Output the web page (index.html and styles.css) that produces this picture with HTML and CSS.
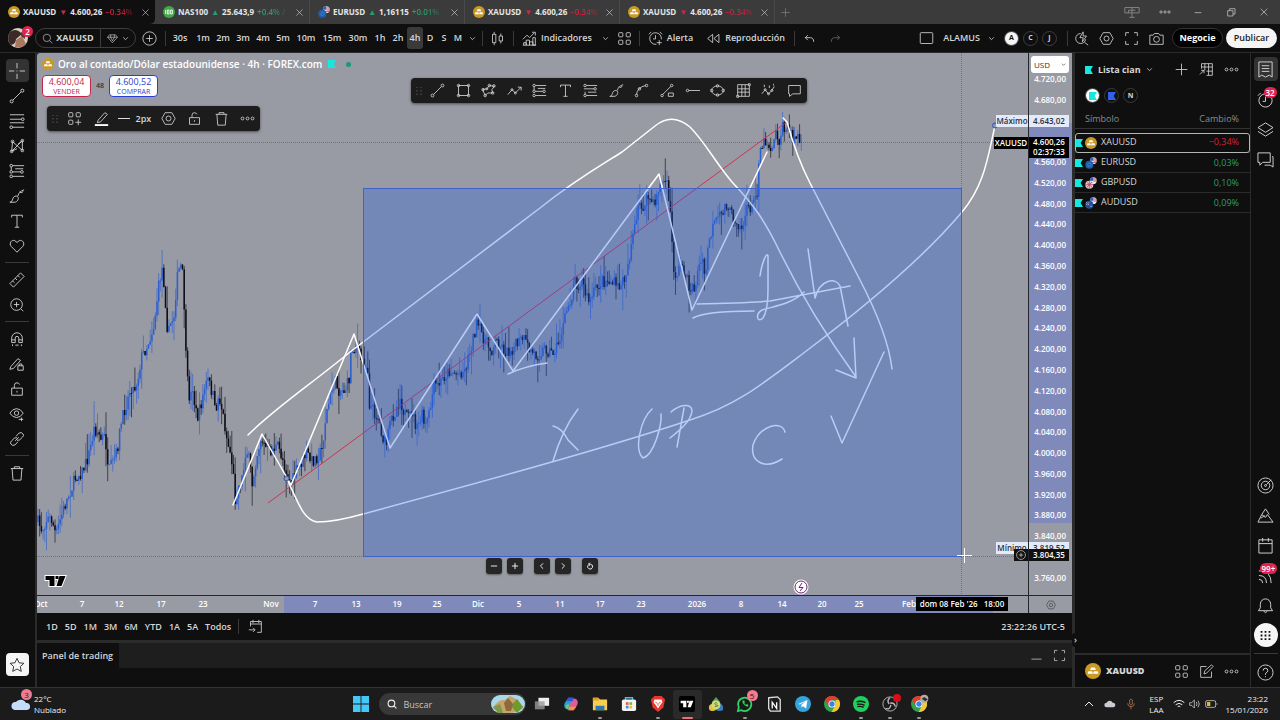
FILE: index.html
```html
<!DOCTYPE html>
<html lang="es">
<head>
    <meta charset="UTF-8">
    <meta name="viewport" content="width=device-width, initial-scale=1.0">
    <title>XAUUSD 4.600,26 −0.34% ALAMUS</title>
    <link rel="stylesheet" href="styles.css">
</head>
<body>
    <!-- icon sprite -->
    <svg class="sprite" aria-hidden="true">
        <symbol id="gold" viewBox="0 0 18 18"><circle cx="9" cy="9" r="9" fill="#c99a26" stroke="none"/><path d="M6.800 5h4.400l1 3H5.800zM3.800 9.200h4.200l1 3H2.800zM10 9.200h4.200l1 3H9z" fill="#fff" stroke="none"/></symbol>
        <symbol id="nas" viewBox="0 0 18 18"><circle cx="9" cy="9" r="9" fill="#43a847" stroke="none"/><path d="M4 6v6M6.500 6h2.500v6H6.500zM11.500 6H14v6h-2.500z" stroke="#fff" stroke-width="1.300"/></symbol>
        <symbol id="eur" viewBox="0 0 18 18"><g stroke="none"><circle cx="12.500" cy="5.500" r="5" fill="#e9e9f2"/><path d="M12.500.5a5 5 0 0 0-5 5h5z" fill="#2d5fb8"/><path d="M12.500 3h4.300M12.500 6h5M9 8.500h7.500" stroke="#d0344c" stroke-width="1.300"/><circle cx="6.500" cy="11.500" r="6" fill="#1c5fb0"/><circle cx="6.500" cy="11.500" r="2.500" fill="none" stroke="#8fb4e0" stroke-dasharray="1 1"/></g></symbol>
        <symbol id="gbp" viewBox="0 0 18 18"><g stroke="none"><circle cx="12.500" cy="5.500" r="5" fill="#e9e9f2"/><path d="M12.500.5a5 5 0 0 0-5 5h5z" fill="#2d5fb8"/><path d="M12.500 3h4.300M12.500 6h5" stroke="#d0344c" stroke-width="1.300"/><circle cx="6.500" cy="11.500" r="6" fill="#e8c9d2"/><path d="M6.500 5.500v12M.5 11.500h12M2.500 7.500l8 8M10.500 7.500l-8 8" stroke="#c04860" stroke-width="1.300"/></g></symbol>
        <symbol id="aud" viewBox="0 0 18 18"><g stroke="none"><circle cx="12.500" cy="5.500" r="5" fill="#e9e9f2"/><path d="M12.500.5a5 5 0 0 0-5 5h5z" fill="#2d5fb8"/><path d="M12.500 3h4.300M12.500 6h5" stroke="#d0344c" stroke-width="1.300"/><circle cx="6.500" cy="11.500" r="6" fill="#2050a0"/><path d="M2 8l4 4M6 8l-4 4M8 14h2" stroke="#fff"/><path d="M4 7v6M1 10h6" stroke="#d0344c"/></g></symbol>
        <symbol id="flag" viewBox="0 0 12 12"><path d="M0 0h12L8.500 6l3.500 6H0z" fill="currentColor" stroke="none"/></symbol>
        <symbol id="close" viewBox="0 0 18 18"><path d="M4 4l10 10M14 4L4 14"/></symbol>
        <symbol id="plus" viewBox="0 0 18 18"><path d="M9 2v14M2 9h14"/></symbol>
        <symbol id="chev" viewBox="0 0 18 18"><path d="M3 6l6 6 6-6"/></symbol>
        <symbol id="dots" viewBox="0 0 18 18"><circle cx="3" cy="9" r="1.700"/><circle cx="9" cy="9" r="1.700"/><circle cx="15" cy="9" r="1.700"/></symbol>
        <symbol id="grip" viewBox="0 0 18 18"><path d="M6 4v1M12 4v1M6 9v1M12 9v1M6 14v1M12 14v1" stroke="#777" stroke-width="2"/></symbol>
        <symbol id="search" viewBox="0 0 18 18"><circle cx="8" cy="8" r="6"/><path d="M12.500 12.500L17 17"/></symbol>
        <symbol id="gem" viewBox="0 0 18 18"><path d="M4 3h10l3 4-8 9-8-9zM1 7h16M6 7l3 6 3-6M6 3v4M12 3v4"/></symbol>
        <symbol id="addc" viewBox="0 0 18 18"><circle cx="9" cy="9" r="8"/><path d="M9 5v8M5 9h8"/></symbol>
        <symbol id="candles" viewBox="0 0 18 18"><path d="M3 4h4v10H3zM5 1v3M5 14v3M11 6h4v6h-4zM13 3v3M13 12v3"/></symbol>
        <symbol id="indic" viewBox="0 0 18 18"><path d="M1 10l5-5 3 3 6-6M12 1.500h4v4M2 17v-3h3v3M5 17v-6h4v6M9 17v-4h4v4M13 17V8h3v9zM1 17h16"/></symbol>
        <symbol id="grid4" viewBox="0 0 18 18"><rect x="2" y="2" width="5" height="5" rx="1"/><rect x="11" y="2" width="5" height="5" rx="1"/><rect x="2" y="11" width="5" height="5" rx="1"/><rect x="11" y="11" width="5" height="5" rx="1"/></symbol>
        <symbol id="gridp" viewBox="0 0 18 18"><rect x="2" y="2" width="5" height="5" rx="1"/><rect x="11" y="2" width="5" height="5" rx="1"/><rect x="2" y="11" width="5" height="5" rx="1"/><path d="M13.500 10v7M10 13.500h7"/></symbol>
        <symbol id="alarm" viewBox="0 0 18 18"><path d="M10 16a7 7 0 1 1 6-6M9 5v4.500H6M1 4l3-3M14 1l3 3M13.500 11v6M10.500 14h6"/></symbol>
        <symbol id="replay" viewBox="0 0 18 18"><path d="M8 4v10L2 9zM15.500 4v10l-6-5z"/></symbol>
        <symbol id="undo" viewBox="0 0 18 18"><path d="M7 5L4 8l3 3M4 8h6q4 0 4 5"/></symbol>
        <symbol id="redo" viewBox="0 0 18 18"><path d="M11 5l3 3-3 3M14 8H8q-4 0-4 5"/></symbol>
        <symbol id="layout" viewBox="0 0 18 18"><rect x="1.500" y="2" width="15" height="13" rx="1"/></symbol>
        <symbol id="quick" viewBox="0 0 18 18"><path d="M8 3a6 6 0 1 0 6 7M12.500 13.500L17 17M11 1L7 8h4l-1 5 5-7h-4z"/></symbol>
        <symbol id="hex" viewBox="0 0 18 18"><path d="M5 2h8l4 7-4 7H5L1 9z"/><circle cx="9" cy="9" r="3"/></symbol>
        <symbol id="full" viewBox="0 0 18 18"><path d="M2 6V2h4M12 2h4v4M16 12v4h-4M6 16H2v-4"/></symbol>
        <symbol id="camera" viewBox="0 0 18 18"><path d="M1 5h4l1.500-2h5L13 5h4v11H1z"/><circle cx="9" cy="10" r="3.500"/></symbol>
        <symbol id="cross" viewBox="0 0 18 18"><path d="M9 0v6M9 12v6M0 9h6M12 9h6M9 8.500v1"/></symbol>
        <symbol id="trend" viewBox="0 0 18 18"><circle cx="3" cy="15" r="1.700"/><circle cx="15" cy="3" r="1.700"/><path d="M4.500 13.500l9-9"/></symbol>
        <symbol id="fib" viewBox="0 0 18 18"><path d="M1 2h16M1 7h13M1 11h16M4 16h13"/><circle cx="15.500" cy="7" r="1.500"/><circle cx="2.500" cy="16" r="1.500"/></symbol>
        <symbol id="pattern" viewBox="0 0 18 18"><path d="M3 15L4 4l11 10V3L3 15M3 15l6-3M15 3l-5 4"/><circle cx="3" cy="15" r="1.500"/><circle cx="4" cy="4" r="1.500"/><circle cx="15" cy="3" r="1.500"/><circle cx="15" cy="14" r="1.500"/></symbol>
        <symbol id="forecast" viewBox="0 0 18 18"><path d="M4 3h13M4 10h9M4 15h13M2.500 4.500v4M7 6.500h9"/><circle cx="2.500" cy="3" r="1.500"/><circle cx="2.500" cy="10" r="1.500"/><circle cx="2.500" cy="15" r="1.500"/><circle cx="14.500" cy="10" r="1.500"/></symbol>
        <symbol id="short" viewBox="0 0 18 18"><path d="M4 3h13M1 7h12M4 15h13M2.500 13.500v-3M6 11h10"/><circle cx="2.500" cy="3" r="1.500"/><circle cx="14.500" cy="7" r="1.500"/><circle cx="2.500" cy="15" r="1.500"/></symbol>
        <symbol id="brush" viewBox="0 0 18 18"><path d="M1 16c4 0 2-7 7-7 4 0 3 7-2 7zM10 9q1-5 7-7M12 4q1 3 4 0"/></symbol>
        <symbol id="text" viewBox="0 0 18 18"><path d="M3 5V2.500h12V5M9 2.500V16M6.500 16h5"/></symbol>
        <symbol id="heart" viewBox="0 0 18 18"><path d="M9 16L2.500 9.500C-.5 6 3 1.500 6.500 3L9 5l2.500-2C15 1.500 18.500 6 15.500 9.500z"/></symbol>
        <symbol id="ruler" viewBox="0 0 18 18"><path d="M1 13L13 1l4 4L5 17zM4 10l2 2M7 7l2 2M10 4l2 2"/></symbol>
        <symbol id="zoomin" viewBox="0 0 18 18"><circle cx="8.500" cy="8.500" r="6.500"/><path d="M13.500 13.500L16 16M8.500 5.500v6M5.500 8.500h6"/></symbol>
        <symbol id="magnet" viewBox="0 0 18 18"><path d="M3 13V8a6 6 0 0 1 12 0v5h-4V8a2 2 0 0 0-4 0v5zM3 10h4M11 10h4M4 15v2M8 15v2M10 15v2M14 15v2"/></symbol>
        <symbol id="penlock" viewBox="0 0 18 18"><path d="M2 12l8-9 3 2-8 9-4 1zM10 11h6v5h-6zM11.500 11V9h3v2"/></symbol>
        <symbol id="unlock" viewBox="0 0 18 18"><path d="M3 8h12v8H3zM6 8V5q0-3 3-3 2 0 3 2M9 11v2"/></symbol>
        <symbol id="eye" viewBox="0 0 18 18"><path d="M1 8q3-5 7.500-5T16 8q-3 5-7.500 5T1 8zM11 15h5M14 13v4"/><circle cx="8.500" cy="8" r="2.500"/></symbol>
        <symbol id="link" viewBox="0 0 18 18"><path d="M8 6l3-3.500q3-2 5 1 1 2-1 3.500l-3 3-3 .5M10 12l-3 3.500q-3 2-5-1-1-2 1-3.500l3-3 3-.5M7 11l4-4"/></symbol>
        <symbol id="trash" viewBox="0 0 18 18"><path d="M2 4h14M6 4V2h6v2M3.500 4l1 13h9l1-13"/></symbol>
        <symbol id="star" viewBox="0 0 18 18"><path d="M9 1.500l2.300 5 5.400.6-4 3.700 1.100 5.400L9 13.500l-4.800 2.700 1.100-5.400-4-3.700 5.400-.6z"/></symbol>
        <symbol id="pencil" viewBox="0 0 18 18"><path d="M5 11l8-9 3 2-8 9-4 1z"/><path d="M1 17h16" stroke="#fff" stroke-width="2.500"/></symbol>
        <symbol id="rect" viewBox="0 0 18 18"><path d="M3 3h12v12H3z"/><circle cx="3" cy="3" r="1.500"/><circle cx="15" cy="3" r="1.500"/><circle cx="3" cy="15" r="1.500"/><circle cx="15" cy="15" r="1.500"/></symbol>
        <symbol id="poly" viewBox="0 0 18 18"><path d="M5 15L2 8l5-1 3-4 6 1-3 4 1 4-6 0-3 3"/><circle cx="5" cy="15" r="1.500"/><circle cx="2.500" cy="8" r="1.500"/><circle cx="7" cy="7" r="1.200"/><circle cx="10" cy="3" r="1.500"/><circle cx="15.500" cy="3.500" r="1.500"/><circle cx="14" cy="12" r="1.500"/></symbol>
        <symbol id="arrowz" viewBox="0 0 18 18"><path d="M1 14l5-6 4 4 7-7M13 5h4v4"/><circle cx="6" cy="8" r="1.200"/><circle cx="10" cy="12" r="1.200"/></symbol>
        <symbol id="arc" viewBox="0 0 18 18"><path d="M3 14q1-9 11-11"/><circle cx="3" cy="15" r="1.500"/><circle cx="6.500" cy="7" r="1.500"/><circle cx="15" cy="3" r="1.500"/></symbol>
        <symbol id="trendo" viewBox="0 0 18 18"><path d="M3 14L13 4M10 12h6v4h-6z"/><circle cx="2.500" cy="15" r="1.500"/><circle cx="14" cy="3" r="1.500"/></symbol>
        <symbol id="hline" viewBox="0 0 18 18"><circle cx="3" cy="9" r="1.500"/><path d="M4.500 9H18"/></symbol>
        <symbol id="ellipse" viewBox="0 0 18 18"><ellipse cx="9" cy="9" rx="7" ry="5.500"/><circle cx="2" cy="9" r="1.500"/><circle cx="16" cy="9" r="1.500"/><circle cx="9" cy="3.500" r="1.500"/><circle cx="9" cy="14.500" r="1.500"/></symbol>
        <symbol id="gann" viewBox="0 0 18 18"><path d="M2 2h14v14H2zM7 2v14M11 2v14M2 7h14M2 11h14"/><circle cx="16" cy="2" r="1.500"/><circle cx="2" cy="16" r="1.500"/></symbol>
        <symbol id="waves" viewBox="0 0 18 18"><path d="M1 13l4-5 4 5 4-4 3-5M4 2v3M10 3v3M15 1v2"/><circle cx="5" cy="8" r="1.200"/><circle cx="9" cy="13" r="1.200"/><circle cx="13" cy="9" r="1.200"/></symbol>
        <symbol id="note" viewBox="0 0 18 18"><path d="M2 3h14v10H7l-4 3v-3H2z"/></symbol>
        <symbol id="list" viewBox="0 0 18 18"><path d="M2 1h14v16l-3-2-4 2-4-2-3 2zM5 5h8M5 8h8M5 11h8"/></symbol>
        <symbol id="clock" viewBox="0 0 18 18"><circle cx="9" cy="10" r="7"/><path d="M9 6v5H6M1 5l3-3"/></symbol>
        <symbol id="layers" viewBox="0 0 18 18"><path d="M9 2l8 5-8 5-8-5zM1 11l8 5 8-5"/></symbol>
        <symbol id="chat" viewBox="0 0 18 18"><path d="M1 2h13v10H6l-3 3v-3H1zM16 6h1v11l-3-2H8"/></symbol>
        <symbol id="target" viewBox="0 0 18 18"><circle cx="9" cy="9" r="8"/><circle cx="9" cy="9" r="4.500"/><circle cx="9" cy="9" r="1"/><path d="M10 8l5-5"/></symbol>
        <symbol id="mount" viewBox="0 0 18 18"><path d="M5 8L9 2l4 6M1 16l4-8 4 3 2-3 6 8zM4 12l4-3"/></symbol>
        <symbol id="cal" viewBox="0 0 18 18"><path d="M2 3h14v14H2zM2 7h14M6 1v4M12 1v4"/></symbol>
        <symbol id="calgo" viewBox="0 0 18 18"><path d="M3 9V3h13v13h-5M3 6h13M6 1v4M13 1v4M1 13h7M6 10.500L8.500 13 6 15.500"/></symbol>
        <symbol id="feed" viewBox="0 0 18 18"><path d="M2 4q13 0 13 13M2 9q8 0 8 8M2 13q4 0 4 4"/></symbol>
        <symbol id="bell" viewBox="0 0 18 18"><path d="M1.500 14.500h15l-2-3V8c0-8-11-8-11 0v3.500zM7 15q2 3 4 0"/></symbol>
        <symbol id="apps" viewBox="0 0 18 18"><path d="M1 3h3M7.500 3h3M14 3h3M1 9h3M7.500 9h3M14 9h3M1 15h3M7.500 15h3M14 15h3" stroke-width="3"/></symbol>
        <symbol id="help" viewBox="0 0 18 18"><circle cx="9" cy="9" r="8"/><path d="M6.500 7q0-2.500 2.500-2.500T11.500 7Q11.500 8.500 9 10v1.500M9 13v1"/></symbol>
        <symbol id="tableico" viewBox="0 0 18 18"><path d="M3 8V2h13v14H9M3 6h13M7 2v8M11.500 2v14M9 11h7M1 15l5-5M2.500 10H6v3.500"/></symbol>
        <symbol id="edit" viewBox="0 0 18 18"><path d="M9 3H2v13h13V9M6 12l1-4 8-7 2 2-8 8z"/></symbol>
        <symbol id="tv" viewBox="0 0 22 14"><path d="M1 2h9v10H5V6H1zM15 2h6l-4 10h-5zM11 2h3v3h-3z"/></symbol>
        <symbol id="monitor" viewBox="0 0 18 18"><path d="M1 4h16v6H1zM9 4v11M6 15h6M5 10v-3h8"/></symbol>
        <symbol id="reload" viewBox="0 0 18 18"><path d="M5 7a5.500 5.500 0 1 0 5-2H6M9 1.500L5.500 5 9 8.500"/></symbol>
        <symbol id="left" viewBox="0 0 18 18"><path d="M11.500 3l-6 6 6 6"/></symbol>
        <symbol id="right" viewBox="0 0 18 18"><path d="M6.500 3l6 6-6 6"/></symbol>
        <symbol id="minus" viewBox="0 0 18 18"><path d="M2 9h14"/></symbol>
    </svg>

    <div class="app">
        <header class="tabs">
            <button class="tab active"><svg class="coin"><use href="#gold"/></svg><b>XAUUSD</b><i class="down">▼</i><b>4.600,26</b><span class="pct neg">−0.34%</span><svg class="x"><use href="#close"/></svg></button>
            <button class="tab"><svg class="coin"><use href="#nas"/></svg><b>NAS100</b><i class="up">▲</i><b>25.643,9</b><span class="pct pos">+0.4% /</span><svg class="x"><use href="#close"/></svg></button>
            <button class="tab"><svg class="coin"><use href="#eur"/></svg><b>EURUSD</b><i class="up">▲</i><b>1,16115</b><span class="pct pos">+0.01%</span><svg class="x"><use href="#close"/></svg></button>
            <button class="tab"><svg class="coin"><use href="#gold"/></svg><b>XAUUSD</b><i class="down">▼</i><b>4.600,26</b><span class="pct neg">−0.34%</span><svg class="x"><use href="#close"/></svg></button>
            <button class="tab"><svg class="coin"><use href="#gold"/></svg><b>XAUUSD</b><i class="down">▼</i><b>4.600,26</b><span class="pct neg">−0.34%</span><svg class="x"><use href="#close"/></svg></button>
            <button class="newtab" aria-label="Nueva pestaña"><svg class="x"><use href="#plus"/></svg></button>
            <div class="window-btns">
                <button aria-label="Pantallas"><svg class="big"><use href="#monitor"/></svg></button>
                <button aria-label="Menú"><svg class="mid"><use href="#dots"/></svg></button>
                <button aria-label="Minimizar"><svg viewBox="0 0 18 18"><path d="M4 10h10"/></svg></button>
                <button aria-label="Restaurar"><svg viewBox="0 0 18 18"><path d="M4 7h8v8H4zM7 7V4h8v8h-3"/></svg></button>
                <button aria-label="Cerrar"><svg><use href="#close"/></svg></button>
            </div>
        </header>

        <div class="toolbar">
            <button class="avatar" aria-label="Perfil">
                <svg viewBox="0 0 20 20"><circle cx="10" cy="10" r="10" fill="#d9cfc6"/><path d="M2 4a10 10 0 0 0 1 13q5-1 5-6l6-5q-6-7-12-2z" fill="#3b2a26"/><path d="M8 12l6-4 4 8q-5 5-11 3z" fill="#a87860"/><path d="M13 4l4 2v5l-4-3z" fill="#5c3a32"/></svg>
                <span class="badge">2</span>
            </button>
            <div class="search-pill">
                <button class="symbol"><svg><use href="#search"/></svg>XAUUSD</button>
                <button class="gem" aria-label="Símbolos similares"><svg><use href="#gem"/></svg><svg class="chev"><use href="#chev"/></svg></button>
            </div>
            <button class="tool" aria-label="Comparar"><svg><use href="#addc"/></svg></button>
            <span class="sep"></span>
            <button class="tf wide">30s</button>
            <button class="tf">1m</button>
            <button class="tf">2m</button>
            <button class="tf">3m</button>
            <button class="tf">4m</button>
            <button class="tf">5m</button>
            <button class="tf wide">10m</button>
            <button class="tf wide">15m</button>
            <button class="tf wide">30m</button>
            <button class="tf hour">1h</button>
            <button class="tf hour">2h</button>
            <button class="tf hour on">4h</button>
            <button class="tf one">D</button>
            <button class="tf one">S</button>
            <button class="tf one">M</button>
            <button class="tf one" aria-label="Más intervalos"><svg class="chev"><use href="#chev"/></svg></button>
            <span class="sep"></span>
            <button class="tool" aria-label="Velas"><svg><use href="#candles"/></svg></button>
            <span class="sep"></span>
            <button class="labelled"><svg><use href="#indic"/></svg>Indicadores</button>
            <button class="tool chevbtn" aria-label="Favoritos"><svg class="chev"><use href="#chev"/></svg></button>
            <button class="tool slim" aria-label="Plantillas"><svg><use href="#grid4"/></svg></button>
            <span class="sep"></span>
            <button class="labelled"><svg><use href="#alarm"/></svg>Alerta</button>
            <button class="labelled second"><svg><use href="#replay"/></svg>Reproducción</button>
            <span class="sep"></span>
            <button class="tool" aria-label="Deshacer"><svg><use href="#undo"/></svg></button>
            <button class="tool dim" aria-label="Rehacer"><svg><use href="#redo"/></svg></button>
            <div class="toolbar-right">
                <button class="tool" aria-label="Diseño"><svg><use href="#layout"/></svg></button>
                <button class="layout-name">ALAMUS<svg class="chev"><use href="#chev"/></svg></button>
                <button class="round on">A</button>
                <button class="round">C</button>
                <button class="round">J</button>
                <span class="sep"></span>
                <button class="tool" aria-label="Búsqueda rápida"><svg><use href="#quick"/></svg></button>
                <button class="tool" aria-label="Configuración"><svg><use href="#hex"/></svg></button>
                <button class="tool" aria-label="Pantalla completa"><svg><use href="#full"/></svg></button>
                <button class="tool" aria-label="Captura"><svg><use href="#camera"/></svg></button>
                <button class="pill dark">Negocie</button>
                <button class="pill light">Publicar</button>
            </div>
        </div>

        <main class="workspace">
            <nav class="draw-tools">
                <button class="on" aria-label="Cruz"><svg><use href="#cross"/></svg></button>
                <button aria-label="Línea"><svg><use href="#trend"/></svg></button>
                <button aria-label="Fibonacci"><svg><use href="#fib"/></svg></button>
                <button aria-label="Patrones"><svg><use href="#pattern"/></svg></button>
                <button aria-label="Previsión"><svg><use href="#forecast"/></svg></button>
                <button aria-label="Pincel"><svg><use href="#brush"/></svg></button>
                <button aria-label="Texto"><svg><use href="#text"/></svg></button>
                <button aria-label="Iconos"><svg><use href="#heart"/></svg></button>
                <hr>
                <button aria-label="Medir"><svg><use href="#ruler"/></svg></button>
                <button aria-label="Acercar"><svg><use href="#zoomin"/></svg></button>
                <hr>
                <button aria-label="Imán"><svg><use href="#magnet"/></svg></button>
                <button aria-label="Modo dibujo"><svg><use href="#penlock"/></svg></button>
                <button aria-label="Bloquear"><svg><use href="#unlock"/></svg></button>
                <button aria-label="Ocultar"><svg><use href="#eye"/></svg></button>
                <button aria-label="Enlazar"><svg><use href="#link"/></svg></button>
                <hr>
                <button aria-label="Eliminar"><svg><use href="#trash"/></svg></button>
                <button class="fav" aria-label="Favoritos"><svg><use href="#star"/></svg></button>
            </nav>

            <section class="center">
                <div class="chart">
                    <div class="plot">
                        <svg class="canvas" viewBox="37 53 991 542" preserveAspectRatio="none">
                            <path class="dotted" d="M37 142.500h991M37 556.500h991M961.500 53v542"/>
                            <g id="candles-layer"></g>
                            <path class="red" d="M268 503L787 122"/>
                            <g class="ink">
                                <path d="M233 505L262 434L291 485L354 334L390 448L477 314L513 371L659 174L692 310L767 152M783 118L787 122Q797 158 810 183L860 280Q888 334 892 369"/>
                                <path d="M248 435C275 408 310 385 350 352L540 208C575 180 600 166 622 152L655 126Q672 112 690 127C705 142 715 162 732 182C755 206 765 222 776 244C798 290 822 330 856 377M836 370L856 378L854 338"/>
                                <path d="M995 126C988 155 985 185 962 212C920 262 850 318 805 352S735 406 690 420C600 450 470 485 363 514Q335 522 317 522C304 520 299 505 287 479"/>
                                <path d="M508 374Q525 366 547 363"/>
                                <path d="M697 304Q745 303 770 301L850 286M693 318Q705 311 754 311M760 276C762 262 767 251 768 256L768 290Q768 310 763 318C757 324 755 314 762 310C775 306 792 304 804 292M808 249L815 298C820 279 836 277 840 286L848 326"/>
                                <path d="M553 426Q562 428 568 440L578 450M578 409Q562 430 553 461"/>
                                <path d="M652 409C640 420 634 450 643 458C654 455 662 425 661 414M684 408L677 447M671 412C680 404 692 403 692 411C691 421 680 430 670 438"/>
                                <path d="M785 432C782 420 760 425 753 445C750 462 765 470 782 459"/>
                                <path d="M884 352L842 443L831 416"/>
                            </g>
                            <rect class="range" x="363.500" y="188.500" width="598" height="368"/>
                            <g class="handle"><circle cx="995" cy="125.500" r="2.500"/><circle cx="286.500" cy="478.500" r="2.500"/></g>
                            <path class="cursor" d="M957 555.500h15M964.500 548v15"/>
                        </svg>

                        <div class="legend">
                            <div class="legend-title"><svg class="coin"><use href="#gold"/></svg>Oro al contado/Dólar estadounidense · 4h · FOREX.com<svg class="flag"><use href="#flag"/></svg><span class="live"></span></div>
                            <div class="orders">
                                <button class="order sell">4.600,04<small>VENDER</small></button>
                                <span class="spread">48</span>
                                <button class="order buy">4.600,52<small>COMPRAR</small></button>
                            </div>
                        </div>

                        <div class="floating style-bar">
                            <svg class="grip"><use href="#grip"/></svg>
                            <button aria-label="Plantilla"><svg><use href="#gridp"/></svg></button>
                            <button aria-label="Color"><svg><use href="#pencil"/></svg></button>
                            <button class="width-btn"><span class="dash"></span>2px</button>
                            <button aria-label="Ajustes"><svg><use href="#hex"/></svg></button>
                            <button aria-label="Bloquear"><svg><use href="#unlock"/></svg></button>
                            <button aria-label="Eliminar"><svg><use href="#trash"/></svg></button>
                            <button aria-label="Más"><svg><use href="#dots"/></svg></button>
                        </div>

                        <div class="floating fav-bar">
                            <svg class="grip"><use href="#grip"/></svg>
                            <button aria-label="Línea"><svg><use href="#trend"/></svg></button>
                            <button aria-label="Rectángulo"><svg><use href="#rect"/></svg></button>
                            <button aria-label="Trazado"><svg><use href="#poly"/></svg></button>
                            <button aria-label="Ruta"><svg><use href="#arrowz"/></svg></button>
                            <button aria-label="Posición larga"><svg><use href="#forecast"/></svg></button>
                            <button aria-label="Texto"><svg><use href="#text"/></svg></button>
                            <button aria-label="Posición corta"><svg><use href="#short"/></svg></button>
                            <button aria-label="Pincel"><svg><use href="#brush"/></svg></button>
                            <button aria-label="Curva"><svg><use href="#arc"/></svg></button>
                            <button aria-label="Línea con info"><svg><use href="#trendo"/></svg></button>
                            <button aria-label="Rayo horizontal"><svg><use href="#hline"/></svg></button>
                            <button aria-label="Elipse"><svg><use href="#ellipse"/></svg></button>
                            <button aria-label="Caja de Gann"><svg><use href="#gann"/></svg></button>
                            <button aria-label="Ondas"><svg><use href="#waves"/></svg></button>
                            <button aria-label="Nota"><svg><use href="#note"/></svg></button>
                        </div>

                        <div class="nav-btns">
                            <button aria-label="Alejar"><svg><use href="#minus"/></svg></button>
                            <button aria-label="Acercar"><svg><use href="#plus"/></svg></button>
                            <button class="gap" aria-label="Izquierda"><svg><use href="#left"/></svg></button>
                            <button aria-label="Derecha"><svg><use href="#right"/></svg></button>
                            <button class="gap" aria-label="Restablecer"><svg><use href="#reload"/></svg></button>
                        </div>
                        <svg class="tv-logo"><use href="#tv"/></svg>
                        <svg class="event" viewBox="0 0 16 16"><circle cx="8" cy="8" r="7.500" fill="#fff" stroke="none"/><circle cx="8" cy="8" r="6" stroke="#6d1f7a"/><path d="M9 4L6 8.500h4L7 12" stroke="#6d1f7a"/></svg>

                        <span class="tag max">Máximo</span>
                        <span class="tag sym">XAUUSD</span>
                        <span class="tag min">Mínimo</span>
                        <button class="tag add" aria-label="Añadir orden"><svg><use href="#addc"/></svg></button>
                    </div>

                    <div class="price-axis">
                        <label class="currency"><select aria-label="Moneda"><option>USD</option></select><svg class="chev"><use href="#chev"/></svg></label>
                        <div class="prices" id="prices"></div>
                        <span class="ptag max">4.643,02</span>
                        <span class="ptag last">4.600,26<br>02:37:33</span>
                        <span class="ptag min">3.819,52</span>
                        <span class="ptag cur">3.804,35</span>
                    </div>

                    <div class="time-axis">
                        <div class="time-range"></div>
                        <div id="times"></div>
                        <span class="time-tag">dom 08 Feb '26 &nbsp; 18:00</span>
                    </div>
                    <button class="axis-corner" aria-label="Ajustes de escala"><svg><use href="#hex"/></svg></button>
                </div>

                <div class="ranges">
                    <button>1D</button><button>5D</button><button>1M</button><button>3M</button><button>6M</button><button>YTD</button><button>1A</button><button>5A</button><button>Todos</button>
                    <span class="sep"></span>
                    <button aria-label="Ir a la fecha"><svg><use href="#calgo"/></svg></button>
                    <span class="utc">23:22:26 UTC-5</span>
                </div>

                <div class="trading">
                    <button class="trading-tab">Panel de trading</button>
                    <div class="trading-btns">
                        <button aria-label="Minimizar panel"><svg viewBox="0 0 18 18"><path d="M2 14h14"/></svg></button>
                        <button aria-label="Maximizar panel"><svg><use href="#full"/></svg></button>
                    </div>
                </div>
                <div class="trading-body"></div>
            </section>

            <aside class="watch">
                <div class="watch-head">
                    <button class="list-name"><svg class="flag"><use href="#flag"/></svg>Lista cian<svg class="chev"><use href="#chev"/></svg></button>
                    <button aria-label="Añadir símbolo"><svg><use href="#plus"/></svg></button>
                    <button aria-label="Vista"><svg><use href="#tableico"/></svg></button>
                    <button aria-label="Más"><svg><use href="#dots"/></svg></button>
                </div>
                <div class="chips">
                    <button class="chip on" aria-label="Cian"><svg class="flag"><use href="#flag"/></svg></button>
                    <button class="chip blue" aria-label="Azul"><svg class="flag"><use href="#flag"/></svg></button>
                    <button class="chip">N</button>
                </div>
                <table class="symbols">
                    <thead><tr><th>Símbolo</th><th>Cambio%</th></tr></thead>
                    <tbody>
                        <tr class="selected"><td><svg class="flag"><use href="#flag"/></svg><svg class="coin"><use href="#gold"/></svg>XAUUSD</td><td class="neg">−0,34%</td></tr>
                        <tr><td><svg class="flag"><use href="#flag"/></svg><svg class="coin"><use href="#eur"/></svg>EURUSD</td><td class="pos">0,03%</td></tr>
                        <tr><td><svg class="flag"><use href="#flag"/></svg><svg class="coin"><use href="#gbp"/></svg>GBPUSD</td><td class="pos">0,10%</td></tr>
                        <tr><td><svg class="flag"><use href="#flag"/></svg><svg class="coin"><use href="#aud"/></svg>AUDUSD</td><td class="pos">0,09%</td></tr>
                    </tbody>
                </table>
                <button class="collapse" aria-label="Ocultar panel">›</button>
                <div class="detail">
                    <svg class="coin"><use href="#gold"/></svg><b>XAUUSD</b>
                    <button aria-label="Cuadrícula"><svg><use href="#grid4"/></svg></button>
                    <button aria-label="Editar"><svg><use href="#edit"/></svg></button>
                    <button aria-label="Más"><svg><use href="#dots"/></svg></button>
                </div>
            </aside>

            <nav class="rail">
                <button class="on" aria-label="Lista de seguimiento"><svg><use href="#list"/></svg></button>
                <button aria-label="Alertas"><svg><use href="#clock"/></svg><span class="badge">32</span></button>
                <button aria-label="Capas"><svg><use href="#layers"/></svg></button>
                <button aria-label="Chats"><svg><use href="#chat"/></svg></button>
                <button class="push" aria-label="Analizadores"><svg><use href="#target"/></svg></button>
                <button aria-label="Pine"><svg><use href="#mount"/></svg></button>
                <button aria-label="Calendario"><svg><use href="#cal"/></svg></button>
                <button aria-label="Noticias"><svg><use href="#feed"/></svg><span class="badge long">99+</span></button>
                <button aria-label="Notificaciones"><svg><use href="#bell"/></svg></button>
                <button class="apps" aria-label="Productos"><svg><use href="#apps"/></svg></button>
                <hr>
                <button aria-label="Ayuda"><svg><use href="#help"/></svg></button>
            </nav>
        </main>

        <footer class="taskbar">
            <button class="weather">
                <span class="weather-ico"><svg viewBox="0 0 20 16"><path d="M4 15a4 4 0 0 1 1-8 6 6 0 0 1 10 1 3.500 3.500 0 0 1 1 7z" fill="#c5dcfa"/></svg><span class="badge pink">3</span></span>
                <span>22°C<br>Nublado</span>
            </button>
            <div class="task-apps">
                <button class="app-ico start" aria-label="Inicio"><svg viewBox="0 0 18 18"><path d="M0 0h8.500v8.500H0zM9.500 0H18v8.500H9.500zM0 9.500h8.500V18H0zM9.500 9.500H18V18H9.500z" fill="#45c8f5"/></svg></button>
                <label class="task-search">
                    <svg><use href="#search"/></svg>
                    <input type="text" placeholder="Buscar" aria-label="Buscar">
                    <svg class="scene" viewBox="0 0 34 18"><rect width="34" height="18" rx="9" fill="#a9d8ea"/><path d="M2 13q5-9 12-8l5-4 8 4 5 8q-5 5-15 5T2 13z" fill="#c6a368"/><path d="M20 11l6-7 6 8-6 6z" fill="#6f9b2e"/><path d="M2 12l7-3 3 9H7z" fill="#7e9a48"/><path d="M13 8l4-5 5 6-2 7h-5z" fill="#8d693c"/></svg>
                </label>
                <button class="app-ico" aria-label="Vista de tareas"><svg viewBox="0 0 18 18"><path d="M5 2h12v9H5z" fill="#eee"/><path d="M1 6h11v9H1z" fill="#999" opacity=".8"/></svg></button>
                <button class="app-ico" aria-label="Copilot"><svg viewBox="0 0 18 18"><path d="M6 2h6l-4 13H4Q0 13 2 8z" fill="#2a9be8"/><path d="M12 16H6l4-13h4q4 2 2 7z" fill="#e05a9d"/><path d="M6 2h6l-1 4H4z" fill="#3457cf"/><path d="M12 16H6l1-4h8z" fill="#f0953c"/><path d="M3 10l4-1-1 6q-3 0-3-5z" fill="#6fcb5b"/></svg></button>
                <button class="app-ico run" aria-label="Explorador"><svg viewBox="0 0 18 18"><path d="M1 2h6l2 2h8v12H1z" fill="#f8cf4f"/><path d="M1 2h6l1 3H1z" fill="#e29f25"/><path d="M4 11h10v5H4z" fill="#2779b8"/></svg></button>
                <button class="app-ico" aria-label="Tienda"><svg viewBox="0 0 18 18"><path d="M5 5V2h8v3" stroke="#4bb9ee" stroke-width="1.500"/><rect x="1" y="4" width="16" height="13" rx="2" fill="#f2f2f2"/><path d="M5.500 7h3v3h-3z" fill="#e8573f"/><path d="M9.500 7h3v3h-3z" fill="#77b53b"/><path d="M5.500 11h3v3h-3z" fill="#3a8fe0"/><path d="M9.500 11h3v3h-3z" fill="#f3bb33"/></svg></button>
                <button class="app-ico run" aria-label="Brave"><svg viewBox="0 0 18 18"><path d="M5 0h8l4 4-2 9-6 5-6-5-2-9z" fill="#e8352e"/><path d="M5 4h8l1 3-3 4-2 3-2-3-3-4z" fill="#fff"/><path d="M6 7l2 1M12 7l-2 1M9 8v3" stroke="#e8352e"/></svg></button>
                <button class="app-ico focus" aria-label="TradingView"><svg class="tvmini" viewBox="0 0 22 14"><path d="M1 2h9v10H5V6H1zM15 2h6l-4 10h-5zM11 2h3v3h-3z" fill="#fff"/></svg></button>
                <button class="app-ico" aria-label="Finanzas"><svg viewBox="0 0 18 18"><path d="M9 1l4 5 4 10H2L5 6z" fill="#51a25f"/><circle cx="5" cy="13" r="4" fill="#e9c43b"/><circle cx="13" cy="13" r="4" fill="#3a78c8"/><circle cx="9" cy="10" r="5" fill="#d5dc72"/><path d="M10.500 8q-3-1-3 .5t3 2-3 1.500" stroke="#48764c"/></svg></button>
                <button class="app-ico run" aria-label="WhatsApp"><svg viewBox="0 0 18 18"><path d="M1 17l1-4a7.500 7.500 0 1 1 3 3z" stroke="#2fd565" stroke-width="2"/><path d="M6 5q0 5 6 7l1-2-2-1-1 1-2-2 1-1-1-2z" fill="#2fd565"/></svg><span class="badge pink">5</span></button>
                <button class="app-ico" aria-label="Notion"><svg viewBox="0 0 18 18"><path d="M3 2l10-1 3 3v13H5l-2-3z" stroke="#ddd" stroke-width="1.500"/><path d="M7 14V7l5 7V7" stroke="#fff" stroke-width="1.500"/></svg></button>
                <button class="app-ico" aria-label="Telegram"><svg viewBox="0 0 18 18"><circle cx="9" cy="9" r="9" fill="#33a4dc"/><path d="M3.500 9L14 4.500 12.500 14 9 11.500 7.500 13 7 10l5-4-6.500 3.700z" fill="#fff"/></svg></button>
                <button class="app-ico" aria-label="Chrome"><svg viewBox="0 0 18 18"><circle cx="9" cy="9" r="9" fill="#2fa24f"/><path d="M1.200 4.500a9 9 0 0 1 15.600 0H9L6 12z" fill="#e23c31"/><path d="M16.800 4.500A9 9 0 0 1 8.500 18L13 10V4.500z" fill="#f8c832"/><circle cx="9" cy="9" r="4" fill="#fff"/><circle cx="9" cy="9" r="3" fill="#3f7fe8"/></svg></button>
                <button class="app-ico run" aria-label="Spotify"><svg viewBox="0 0 18 18"><circle cx="9" cy="9" r="9" fill="#21cf5e"/><path d="M4 6.500q5-1.500 10 1M4.500 9.500q4.500-1 8.500 1M5 12q4-1 7 .8" stroke="#111" stroke-width="1.500"/></svg></button>
                <button class="app-ico run" aria-label="OBS"><svg viewBox="0 0 18 18"><circle cx="9" cy="9" r="8" stroke="#bbb"/><path d="M9 2q-4 3-1 7M15 12q-1-5-6-4M4 14q5 2 6-4" stroke="#bbb" stroke-width="1.500"/></svg><span class="rec"></span></button>
                <button class="app-ico run" aria-label="Chrome, perfil"><svg viewBox="0 0 18 18"><circle cx="9" cy="9" r="9" fill="#2fa24f"/><path d="M1.200 4.500a9 9 0 0 1 15.600 0H9L6 12z" fill="#e23c31"/><path d="M16.800 4.500A9 9 0 0 1 8.500 18L13 10V4.500z" fill="#f8c832"/><circle cx="9" cy="9" r="4" fill="#fff"/><circle cx="9" cy="9" r="3" fill="#3f7fe8"/><circle cx="15" cy="3" r="4.500" fill="#b9aaa4"/><path d="M12 3l3-2 4 3-3 2z" fill="#333"/></svg></button>
            </div>
            <div class="tray">
                <button aria-label="Iconos ocultos"><svg viewBox="0 0 18 18"><path d="M3 12l6-6 6 6" stroke-width="1.500"/></svg></button>
                <button aria-label="OneDrive"><svg viewBox="0 0 18 18"><path d="M4 14a3.500 3.500 0 0 1 0-7 5 5 0 0 1 9 0 3.500 3.500 0 0 1 1 7z" fill="#c9cdd2" stroke="none"/></svg></button>
                <button class="mic" aria-label="Micrófono"><svg viewBox="0 0 18 18"><path d="M7 3q2-3 4 0v6q-2 3-4 0zM4 8q0 5 5 5t5-5M9 13v4"/></svg></button>
                <button class="lang">ESP<br>LAA</button>
                <button class="status" aria-label="Red, sonido y batería">
                    <svg viewBox="0 0 18 18"><path d="M1 7q8-7 16 0M4 10q5-4 10 0M7 13q2-2 4 0" stroke-width="1.500"/></svg>
                    <svg viewBox="0 0 18 18"><path d="M1 7h3l4-4v12l-4-4H1zM11 6q2 3 0 6M13.500 4q4 5 0 10"/></svg>
                    <svg viewBox="0 0 18 18"><rect x="1" y="4" width="15" height="10" rx="2"/><path d="M3 6h5v6H3z" fill="#e0b53a" stroke="none"/><path d="M18 8v2"/></svg>
                </button>
                <button class="clock">23:22<br>15/01/2026</button>
            </div>
        </footer>
    </div>
    <script src="chart.js"></script>
</body>
</html>
```
FILE: styles.css
```css
* {
    margin: 0;
    padding: 0;
    box-sizing: border-box;
}

body {
    font-family: "Open Sans", "Noto Sans", sans-serif;
    font-size: 9px;
    font-weight: 600;
    line-height: 12px;
    color: #d6d6d6;
    background: #0f0f0f;
}

button,
select,
input {
    font: inherit;
    color: inherit;
    background: none;
    border: none;
}

button {
    position: relative;
    display: flex;
    align-items: center;
    justify-content: center;
    flex: none;
    white-space: nowrap;
    cursor: pointer;
}

svg {
    width: 15px;
    height: 15px;
    flex: none;
    fill: none;
    stroke: currentColor;
    overflow: visible;
}

svg.chev {
    width: 7px;
    height: 7px;
    stroke-width: 2;
}

.sprite {
    display: none;
}

.coin {
    width: 12px;
    height: 12px;
}

.flag {
    width: 8px;
    height: 8px;
    color: #14e8e0;
}

.pos {
    color: #2f9e6e;
}

.neg {
    color: #d2213f;
}

.badge {
    position: absolute;
    top: -6px;
    left: 10px;
    min-width: 11px;
    height: 11px;
    padding: 0 2px;
    border-radius: 6px;
    background: #e0234e;
    color: #fff;
    font-size: 8px;
    line-height: 11px;
    text-align: center;
}

.badge.pink {
    background: #ef7d90;
    color: #26141a;
}

.app {
    display: flex;
    flex-direction: column;
    min-height: 100vh;
}

.sep {
    width: 1px;
    height: 15px;
    background: #3a3a3a;
    flex: none;
}

/* window tabs */
.tabs {
    display: flex;
    height: 24px;
    background: #3b3b3b;
    flex: none;
}

.tab {
    flex: 0 1 155px;
    min-width: 0;
    justify-content: flex-start;
    gap: 3px;
    padding: 0 4px 0 8px;
    border-right: 1px solid #4a4a4a;
    font-size: 8px;
}

.tab.active {
    background: #0f0f0f;
    border-radius: 0 0 5px 0;
    border: none;
}

.tab b {
    font-weight: 700;
    color: #e6e6e6;
}

.tab i {
    font-size: 8px;
    font-style: normal;
}

.tab .up {
    color: #2a9d78;
}

.tab .down {
    color: #c9284a;
}

.tab .pct {
    margin-right: auto;
    -webkit-mask-image: linear-gradient(90deg, #000 50%, rgba(0, 0, 0, 0.3));
    mask-image: linear-gradient(90deg, #000 50%, rgba(0, 0, 0, 0.3));
}

.tab .x,
.newtab .x {
    width: 11px;
    height: 11px;
}

.newtab {
    width: 20px;
    color: #8c8c8c;
}

.window-btns {
    display: flex;
    margin-left: auto;
}

.window-btns button {
    width: 33px;
}

.window-btns svg {
    width: 12px;
    height: 12px;
}

.window-btns .big {
    width: 16px;
    height: 16px;
    color: #8c8c8c;
}

/* top toolbar */
.toolbar {
    display: flex;
    align-items: center;
    height: 28px;
    padding: 0 3px 0 8px;
    flex: none;
}

.toolbar > .sep {
    margin: 0 1px 0 3px;
}

.avatar svg {
    width: 20px;
    height: 20px;
    stroke: none;
}

.avatar .badge {
    left: 14px;
    top: -2px;
}

.search-pill {
    display: flex;
    height: 20px;
    margin-left: 7px;
    border: 1px solid #3e3e3e;
    border-radius: 10px;
}

.search-pill svg:not(.chev) {
    width: 11px;
    height: 11px;
}

.symbol {
    width: 65px;
    gap: 3px;
    font-weight: 700;
    border-right: 1px solid #3e3e3e;
}

.gem {
    width: 34px;
    gap: 4px;
}

.tool {
    width: 26px;
    height: 24px;
}

.tool.dim {
    color: #666;
}

.tool.chevbtn {
    width: 16px;
}

.tool.slim {
    width: 22px;
}

.tf {
    width: 20px;
    height: 22px;
    border-radius: 3px;
}

.tf.wide {
    width: 26px;
}

.tf.hour {
    width: 18px;
}

.tf.one {
    width: 14px;
}

.tf.on {
    width: 16px;
    background: #3a3a3a;
}

.labelled {
    gap: 4px;
    padding: 0 6px 0 7px;
}

.toolbar-right {
    display: flex;
    align-items: center;
    margin-left: auto;
}

.toolbar-right .tool {
    width: 25px;
}

.layout-name {
    gap: 8px;
    padding: 0 7px 0 4px;
}

.round {
    width: 15px;
    height: 15px;
    margin: 0 2px;
    border: 1px solid #3e3e3e;
    border-radius: 50%;
    font-size: 7px;
    font-weight: 700;
}

.round.on {
    background: #f5f5f5;
    color: #111;
}

.toolbar-right .sep {
    margin: 0 1px 0 8px;
}

.pill {
    height: 20px;
    width: 51px;
    margin-left: 3px;
    border-radius: 10px;
}

.pill.dark {
    background: #000;
    border: 1px solid #333;
    font-weight: 700;
    color: #fff;
}

.pill.light {
    background: #f5f5f5;
    color: #222;
}

/* workspace */
.workspace {
    flex: 1;
    display: grid;
    grid-template-columns: 37px minmax(0, 1fr) 179px 29px;
    border-top: 1px solid #2b2b2b;
}

.draw-tools {
    display: flex;
    flex-direction: column;
    align-items: center;
    gap: 2px;
    padding: 6px 1px 11px 0;
    border-right: 2px solid #2b2b2b;
}

.draw-tools svg {
    width: 16px;
    height: 16px;
}

.draw-tools button {
    width: 23px;
    height: 23px;
    border-radius: 4px;
}

.draw-tools .on {
    background: #333;
}

.draw-tools .fav {
    margin-top: auto;
    background: #f5f5f5;
    color: #222;
}

.draw-tools hr,
.rail hr {
    width: 24px;
    height: 1px;
    margin: 3px 0;
    border: none;
    background: #3a3a3a;
}

.center {
    display: flex;
    flex-direction: column;
    min-width: 0;
}

.chart {
    flex: 1;
    display: grid;
    grid-template-columns: minmax(0, 1fr) 44px;
    grid-template-rows: minmax(0, 1fr) 18px;
    background: #999ba4;
    color: #fff;
    font-size: 8px;
    border-radius: 3px 3px 0 0;
}

.plot {
    position: relative;
    min-height: 0;
}

.canvas {
    position: absolute;
    width: 100%;
    height: 100%;
    overflow: hidden;
}

.canvas .dotted {
    stroke: #6d7080;
    stroke-dasharray: 1 1;
}

.canvas .red {
    stroke: #cc3354;
}

.canvas .ink {
    stroke: #fff;
    stroke-width: 1.5;
    stroke-linejoin: round;
    stroke-linecap: round;
}

.canvas .range {
    fill: rgba(38, 95, 225, 0.32);
    stroke: #3f62cc;
}

.canvas .handle {
    stroke: #3a4fa0;
    fill: #8c95bd;
}

.canvas .cursor {
    stroke: #fff;
}

.legend {
    position: absolute;
    top: 5px;
    left: 5px;
}

.legend-title {
    display: flex;
    align-items: center;
    gap: 4px;
    font-size: 10px;
}

.legend-title .flag {
    margin-left: 2px;
}

.live {
    width: 5px;
    height: 5px;
    margin-left: 6px;
    border-radius: 50%;
    background: #17997f;
}

.orders {
    display: flex;
    align-items: center;
    margin-top: 5px;
}

.order {
    flex-direction: column;
    width: 49px;
    height: 22px;
    border: 1px solid;
    border-radius: 4px;
    background: #fff;
    font-weight: 400;
    line-height: 10px;
}

.orders .order {
    font-size: 9px;
}

.order small {
    font-size: 7px;
    line-height: 9px;
}

.order.sell {
    color: #c2264a;
}

.order.buy {
    color: #2a3fd0;
}

.spread {
    width: 18px;
    color: #333;
    font-size: 7px;
    text-align: center;
}

.floating {
    position: absolute;
    display: flex;
    align-items: center;
    justify-content: space-between;
    height: 25px;
    border-radius: 4px;
    background: #1c1c1c;
    color: #d6d6d6;
    box-shadow: 0 1px 3px rgba(0, 0, 0, 0.5);
}

.floating button {
    width: 25px;
    height: 24px;
}

.floating .grip {
    width: 12px;
}

.style-bar {
    top: 53px;
    left: 10px;
    width: 213px;
    padding: 0 0 0 2px;
}

.style-bar .width-btn {
    gap: 5px;
    width: 40px;
    font-size: 9px;
}

.dash {
    width: 12px;
    height: 1px;
    background: #ddd;
}

.fav-bar {
    top: 25px;
    left: 374px;
    width: 396px;
    padding-left: 2px;
}

.nav-btns {
    position: absolute;
    left: 449px;
    bottom: 21px;
    display: flex;
    gap: 5px;
}

.nav-btns button {
    width: 16px;
    height: 16px;
    border-radius: 3px;
    background: #262626;
    box-shadow: 0 1px 2px rgba(0, 0, 0, 0.4);
}

.nav-btns svg {
    width: 8px;
    height: 8px;
    stroke-width: 2;
}

.nav-btns .gap {
    margin-left: 6px;
}

.tv-logo {
    position: absolute;
    left: 7px;
    bottom: 7px;
    width: 23px;
    height: 14px;
    fill: #000;
    stroke: #fff;
    stroke-width: 2;
    paint-order: stroke;
}

.event {
    position: absolute;
    left: 76.3%;
    bottom: 0;
    width: 16px;
    height: 16px;
}

.tag,
.ptag {
    position: absolute;
    right: 0;
    height: 12px;
    line-height: 12px;
    text-align: center;
}

.tag {
    width: 32px;
}

.tag.max,
.tag.min,
.ptag.max,
.ptag.min {
    background: #e3ebfb;
    color: #2a2f40;
}

.tag.max,
.ptag.max {
    top: 11.5%;
}

.tag.min,
.ptag.min {
    top: 90.2%;
}

.tag.sym {
    top: 15.5%;
    width: 34px;
    background: #000;
}

.tag.add {
    top: 91.6%;
    width: 14px;
    background: #111;
}

.tag.add svg {
    width: 10px;
    height: 10px;
}

.price-axis {
    position: relative;
    border-left: 1px solid #24262e;
    background: linear-gradient(#999ba4 13%, #7f8abb 13%, #7f8abb 86.7%, #999ba4 86.7%);
}

.ptag {
    left: 0;
    right: 3px;
}

.ptag.last {
    top: 15.5%;
    height: 21px;
    line-height: 10px;
    background: #000;
}

.ptag.cur {
    top: 91.6%;
    background: #111;
}

.currency {
    position: absolute;
    top: 3px;
    left: 2px;
    right: 3px;
}

.currency select {
    width: 100%;
    height: 17px;
    padding-left: 3px;
    border-radius: 3px;
    background: #fff;
    color: #333;
    font-weight: 400;
    appearance: none;
}

.currency svg {
    position: absolute;
    right: 3px;
    top: 6px;
    width: 5px;
    height: 5px;
    color: #222;
}

.prices {
    display: flex;
    flex-direction: column;
    justify-content: space-between;
    height: 100%;
    padding: 20px 6px 11px 0;
    text-align: right;
}

.prices span {
    height: 12px;
}

.time-axis {
    position: relative;
    overflow: hidden;
    border-top: 1px solid #24262e;
}

.time-range {
    position: absolute;
    left: 24.9%;
    width: 71.6%;
    height: 100%;
    background: #7f8abb;
}

.tick {
    position: absolute;
    top: 2px;
    transform: translateX(-50%);
}

.time-tag {
    position: absolute;
    right: 20px;
    top: 1px;
    width: 92px;
    height: 14px;
    line-height: 14px;
    background: #000;
    text-align: center;
}

.axis-corner {
    border-top: 1px solid #24262e;
    border-left: 1px solid #24262e;
    color: #333;
}

.axis-corner svg {
    width: 10px;
    height: 10px;
}

.ranges {
    display: flex;
    align-items: center;
    height: 27px;
    padding: 0 7px 0 9px;
    gap: 7px;
    flex: none;
}

.ranges .sep {
    margin: 0 2px 0 0;
}

.utc {
    margin-left: auto;
}

.trading {
    display: flex;
    height: 28px;
    border-top: 3px solid #2b2b2b;
    background: #1e1e1e;
    flex: none;
}

.trading-tab {
    padding: 0 6px 0 5px;
    background: #0f0f0f;
}

.trading-btns {
    display: flex;
    gap: 10px;
    margin-left: auto;
    padding-right: 6px;
}

.trading-btns svg {
    width: 13px;
    height: 13px;
}

.trading-body {
    height: 19px;
    flex: none;
}

/* watchlist */
.watch {
    position: relative;
    display: flex;
    flex-direction: column;
    border-left: 3px solid #2b2b2b;
    border-right: 1px solid #2b2b2b;
}

.watch-head {
    display: flex;
    align-items: center;
    height: 33px;
    padding-right: 6px;
}

.watch-head button {
    width: 25px;
    height: 24px;
}

.watch-head .list-name {
    width: auto;
    gap: 5px;
    margin-right: auto;
    padding-left: 10px;
    font-weight: 700;
}

.chips {
    display: flex;
    gap: 4px;
    padding: 2px 10px 0;
}

.chip {
    width: 15px;
    height: 15px;
    border: 1px solid #3a3a3a;
    border-radius: 50%;
    font-size: 7px;
    font-weight: 700;
}

.chip.on {
    background: #fff;
}

.chip.blue .flag {
    color: #2f62e8;
}

.symbols {
    width: 100%;
    margin-top: 7px;
    border-collapse: collapse;
}

.symbols th {
    height: 18px;
    padding: 0 11px 0 10px;
    border-bottom: 1px solid #333;
    color: #8c8c8c;
    font-weight: 400;
    text-align: left;
}

.symbols th:last-child,
.symbols td:last-child {
    text-align: right;
}

.symbols tbody::before {
    content: "";
    display: block;
    height: 4px;
}

.symbols td {
    height: 20px;
    padding-right: 11px;
    border-bottom: 1px solid #2b2b2b;
    font-weight: 400;
    vertical-align: middle;
}

.symbols td svg {
    vertical-align: middle;
    margin-right: 2px;
}

.symbols td .coin {
    margin-right: 4px;
}

.symbols .selected {
    outline: 1px solid #b5b5b5;
    outline-offset: -1px;
    border-radius: 3px;
}

.collapse {
    position: absolute;
    left: -3px;
    top: 580px;
    width: 7px;
    height: 14px;
    border-radius: 3px;
    background: #0f0f0f;
}

.detail {
    display: flex;
    align-items: center;
    height: 34px;
    margin-top: auto;
    padding: 0 6px 0 10px;
    border-top: 2px solid #2b2b2b;
}

.detail .coin {
    width: 16px;
    height: 16px;
}

.detail b {
    margin: 0 auto 0 5px;
}

.detail button {
    width: 25px;
}

.rail {
    display: flex;
    flex-direction: column;
    align-items: center;
    gap: 6px;
    padding: 4px 0 3px;
}

.rail svg {
    width: 17px;
    height: 17px;
}

.rail button {
    width: 24px;
    height: 24px;
    border-radius: 4px;
}

.rail .on {
    background: #333;
}

.rail .push {
    margin-top: auto;
}

.rail hr {
    margin: 0;
}

.rail .badge {
    top: 0;
}

.rail .badge.long {
    left: 6px;
}

.rail .apps {
    border-radius: 50%;
    background: #f5f5f5;
    color: #111;
}

.rail .apps svg {
    width: 11px;
    height: 11px;
}

/* desktop taskbar */
.taskbar {
    display: grid;
    grid-template-columns: 1fr auto 1fr;
    height: 33px;
    border-top: 1px solid #333;
    background: #1b1b1b;
    font-size: 8px;
    font-weight: 400;
    line-height: 11px;
    color: #eee;
    flex: none;
}

.weather {
    justify-self: start;
    gap: 3px;
    padding-left: 11px;
    text-align: left;
}

.weather-ico {
    position: relative;
}

.weather-ico svg {
    width: 20px;
    height: 16px;
    stroke: none;
}

.task-apps {
    display: flex;
    align-items: center;
}

.app-ico {
    width: 29px;
    height: 29px;
}

.app-ico svg {
    width: 16px;
    height: 16px;
    stroke: none;
}

.app-ico path[stroke],
.app-ico circle[stroke] {
    fill: none;
}

.app-ico .badge {
    top: 0;
    left: 16px;
}

.app-ico.run::after {
    content: "";
    position: absolute;
    bottom: 0;
    width: 4px;
    height: 2px;
    border-radius: 1px;
    background: #999;
}

.app-ico.focus {
    background: #2a2a2a;
    border-radius: 3px;
}

.app-ico.focus::after {
    content: "";
    position: absolute;
    bottom: 0;
    width: 11px;
    height: 2px;
    border-radius: 1px;
    background: #e57373;
}

.app-ico .tvmini {
    padding: 1px;
    border-radius: 2px;
    background: #000;
}

.rec {
    position: absolute;
    top: 4px;
    left: 17px;
    width: 8px;
    height: 8px;
    border-radius: 50%;
    background: #d80f16;
}

.task-search {
    display: flex;
    align-items: center;
    width: 147px;
    height: 22px;
    margin: 0 2px 0 3px;
    padding: 0 1px 0 8px;
    border-radius: 11px;
    background: #383838;
}

.task-search svg {
    width: 10px;
    height: 10px;
    stroke-width: 2;
}

.task-search input {
    flex: 1;
    min-width: 0;
    padding-left: 7px;
    font-size: 9px;
}

.task-search input::placeholder {
    color: #c4c4c4;
}

.task-search .scene {
    width: 34px;
    height: 18px;
    stroke: none;
}

.tray {
    display: flex;
    justify-self: end;
    gap: 9px;
    padding-right: 12px;
}

.tray svg {
    width: 12px;
    height: 12px;
}

.tray .mic {
    color: #d08a5c;
}

.tray .lang {
    margin-left: 3px;
}

.status {
    gap: 4px;
}

.tray .clock {
    justify-content: flex-end;
    text-align: right;
}
```
FILE: chart.js
```js
// closing levels, [x, y] in chart units
const closes = [
    [38, 522], [42, 530], [47, 518], [52, 520], [56, 536], [60, 520], [64, 508], [69, 494], [72, 487], [76, 476],
    [82, 472], [88, 458], [92, 440], [94, 429], [98, 432], [101, 440], [104, 436], [106, 445], [108, 475], [110, 468],
    [113, 463], [117, 452], [120, 430], [124, 412], [128, 398], [131, 386], [134, 390], [138, 378], [141, 358],
    [147, 346], [151, 335], [154, 325], [157, 300], [159, 284], [162, 268], [164, 284], [166, 308], [168, 338],
    [170, 325], [174, 315], [176, 290], [178, 272], [181, 266], [183, 278], [184, 300], [186, 360], [188, 388],
    [190, 400], [193, 385], [195, 410], [198, 417], [202, 400], [205, 387], [208, 380], [213, 395], [215, 412],
    [219, 396], [221, 405], [224, 420], [227, 440], [231, 456], [233, 470], [235, 500], [238, 488], [243, 475],
    [246, 447], [250, 465], [252, 486], [255, 465], [258, 450], [261, 438], [265, 447], [270, 452], [274, 448],
    [278, 447], [283, 460], [287, 474], [291, 484], [296, 472], [303, 460], [307, 452], [311, 462], [317, 457],
    [322, 450], [326, 415], [332, 390], [335, 381], [339, 390], [345, 390], [349, 380], [351, 352], [354, 348],
    [357, 342], [360, 358], [364, 362], [368, 370], [369, 403], [373, 410], [379, 420], [383, 438], [386, 446],
    [389, 430], [391, 420], [395, 412], [400, 398], [404, 412], [408, 420], [412, 412], [417, 430], [422, 415],
    [425, 428], [430, 412], [434, 384], [438, 386], [443, 378], [450, 370], [456, 374], [465, 370], [468, 358],
    [474, 335], [477, 324], [480, 330], [485, 340], [488, 346], [492, 350], [496, 340], [500, 345], [507, 353],
    [516, 345], [523, 338], [528, 348], [537, 356], [545, 348], [552, 353], [558, 345], [563, 327], [567, 310],
    [572, 295], [574, 278], [578, 285], [582, 280], [586, 296], [590, 302], [595, 290], [602, 281], [608, 281],
    [615, 284], [618, 288], [624, 280], [629, 260], [632, 238], [636, 225], [639, 203], [645, 208], [648, 196],
    [654, 206], [659, 186], [665, 180], [668, 190], [671, 220], [673, 266], [676, 276], [682, 262], [686, 278],
    [690, 288], [695, 288], [698, 270], [702, 260], [705, 278], [709, 240], [714, 225], [721, 215], [727, 202],
    [730, 213], [736, 220], [742, 228], [748, 207], [752, 207], [755, 197], [758, 188], [759, 152], [763, 142],
    [767, 141], [771, 150], [775, 132], [779, 140], [783, 127], [787, 130], [790, 130], [794, 140], [797, 135], [801, 145]
];

// small repeatable random generator
let seed = 7;
function rnd() {
    seed = (seed * 16807) % 2147483647;
    return seed / 2147483647;
}

function levelAt(x) {
    for (let i = 1; i < closes.length; i++) {
        if (x <= closes[i][0]) {
            const [x0, y0] = closes[i - 1];
            const [x1, y1] = closes[i];
            return y0 + (y1 - y0) * (x - x0) / (x1 - x0);
        }
    }
    return closes[closes.length - 1][1];
}

function drawCandles() {
    let out = '';
    let open = levelAt(38);
    for (let x = 38; x < 802; x += 1.7) {
        const close = levelAt(x) + (rnd() - 0.5) * 13;
        const top = Math.min(open, close);
        const bottom = Math.max(open, close);
        const color = close < open ? '#2b5fd0' : '#0b0d18';
        const high = top - rnd() * rnd() * 26;
        const low = bottom + rnd() * rnd() * 26;
        out += `<path d="M${x} ${high}V${low}" stroke="${color}" stroke-width="0.8" opacity="0.8"/>`;
        out += `<path d="M${x} ${top}V${Math.max(bottom, top + 1)}" stroke="${color}" stroke-width="1.5"/>`;
        open = close;
    }
    document.getElementById('candles-layer').innerHTML = out;
}

function drawPrices() {
    const covered = [4640, 4600, 3800];
    let out = '';
    for (let p = 4720; p >= 3760; p -= 40) {
        const label = `${Math.floor(p / 1000)}.${String(p % 1000).padStart(3, '0')},00`;
        out += `<span>${covered.includes(p) ? '' : label}</span>`;
    }
    document.getElementById('prices').innerHTML = out;
}

function drawTimes() {
    const ticks = [
        ['Oct', 41], ['7', 82], ['12', 119], ['17', 161], ['23', 203], ['Nov', 271], ['7', 315], ['13', 356],
        ['19', 397], ['25', 437], ['Dic', 478], ['5', 519], ['11', 560], ['17', 600], ['23', 641], ['2026', 697],
        ['8', 741], ['14', 782], ['20', 822], ['25', 859], ['Feb', 909]
    ];
    document.getElementById('times').innerHTML = ticks
        .map(([label, x]) => `<span class="tick" style="left: ${((x - 37) / 9.91).toFixed(2)}%">${label}</span>`)
        .join('');
}

drawCandles();
drawPrices();
drawTimes();
```
